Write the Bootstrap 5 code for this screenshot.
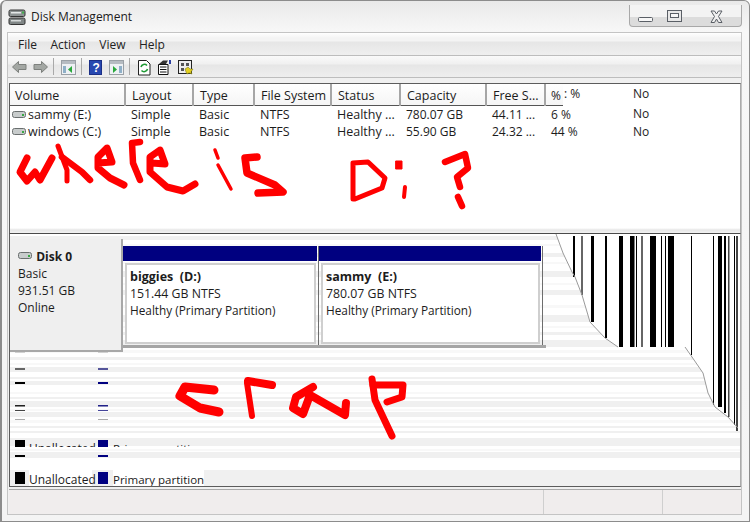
<!DOCTYPE html>
<html lang="en">
<head>
<meta charset="utf-8">
<title>Disk Management</title>
<link href="https://cdn.jsdelivr.net/npm/bootstrap@5.3.0/dist/css/bootstrap.min.css" rel="stylesheet">
<style>
html,body{margin:0;background:#fff;overflow:hidden}
body{font-family:"Open Sans","Noto Sans","Liberation Sans",sans-serif;font-size:12px;color:#1c1c1c;line-height:17px}
.dm-win{width:750px;height:522px;border:1px solid #8c8c8c;border-left-width:2px;border-radius:6px 6px 0 0;background:linear-gradient(#e9e9e9,#f7f7f7 30px,#f4f4f4);position:relative}
.dm-title{height:31px;flex:none}
.dm-title-text{font-size:12px;margin:-1px 0 0 5px}
.dm-title-ico{margin:2px 0 0 6px}
.dm-controls{width:113px;height:22px;margin:-1px 7px 0 0;border:1px solid #a8a8a8;border-top:0;border-radius:0 0 4px 4px;background:linear-gradient(#f3f3f3 55%,#dcdcdc 55%);position:relative}
.dm-controls svg{position:absolute;left:0;top:0}
.dm-inner{flex:1 1 auto;min-height:0;margin:0 7px 6px 5px;border:1px solid #c4c4c4;background:#f0f0f0}
.dm-menu{height:23px;flex:none;border-bottom:1px solid #bdbdbd;background:linear-gradient(#fff,#f4f4f4 5px,#f4f4f4 8px,#e6e6e6 9px,#efefef);padding-left:6px;gap:13.5px}
.dm-menu span{color:#222}
.dm-tools{height:22px;flex:none;border-bottom:1px solid #bdbdbd;background:linear-gradient(#fafafa,#f0f0f0 8px,#e6e6e6 9px,#eee);position:relative}
.dm-tools svg{display:block}
.dm-body{flex:1 1 auto;min-height:0;padding:5px 0 0 1px}
.dm-list{height:150px;flex:none;border-top:1px solid #5c5c5c;border-left:1px solid #5c5c5c;border-right:1px solid #ababab;background:#fff;position:relative;overflow:hidden}
.dm-list::after{content:"";position:absolute;left:0;right:0;bottom:0;height:5px;background:linear-gradient(#fff,#e6e6e6 40%,#f2f2f2)}
.dm-table{width:731px;table-layout:fixed;margin:0;--bs-table-bg:transparent;--bs-table-color:#1c1c1c}
.dm-table th,.dm-table td{padding:0 0 0 6px;font-weight:400;white-space:nowrap;overflow:visible;font-size:12.5px;border:0;line-height:17px;vertical-align:top}
.dm-table td{height:18px}
.dm-table td:nth-child(n+6){font-size:12px}
.dm-table th{height:21px}
.dm-table .dm-head-cell{background:linear-gradient(#fff,#f5f5f5);border-right:2px solid #a6a6a6;border-bottom:1px solid #555;padding-top:3px}
.dm-table .dm-head-cell:first-child{padding-left:5px}
.dm-table .dm-head-last{border-right:0;padding-left:5px;font-size:12px}
.dm-table .dm-tail{padding-top:1px;font-size:12px}
.dm-table .dm-gap{padding-left:1px}
.dm-table .dm-vol{padding-left:2px}
.dm-vol svg{vertical-align:1px;margin-right:2px}
.dm-pane{height:254px;flex:none;border-top:1px solid #4a4a4a;border-bottom:1px solid #5c5c5c;border-left:1px solid #5c5c5c;border-right:1px solid #ababab;background:#fff;position:relative;overflow:hidden}
.dm-bg{position:absolute;left:0;top:0}
.dm-row{position:relative;z-index:1}
.dm-disk{width:113px;height:113px;margin-top:5px;background:#efefef;border-right:2px solid #a8a8a8;border-bottom:2px solid #a8a8a8;padding:9px 0 0 8px;flex:none}
.dm-disk b{font-weight:700;margin-left:1px}
.dm-disk svg{margin-top:1px}
.dm-parts{margin-top:12px;border-bottom:3px solid #a5a5a5;height:102px;padding-right:3px}
.dm-part{height:99px;flex:none;border-right:1px solid #6d6d6d;padding-right:1px}
.dm-bar{height:15px;background:#000080}
.dm-box{height:81px;margin:2px 1px 0 2px;border:2px solid #cfcfcf;background:#fff;padding:3px 0 0 3px;white-space:pre}
.dm-l1{font-weight:700;font-size:12.5px;display:block}
.dm-l2{font-size:12.3px;display:block}
.dm-l3{font-size:11.8px;display:block}
.dm-legend{position:absolute;left:5px;bottom:0;z-index:1;height:16px;align-items:flex-start}
.dm-legend .dm-lg-a,.dm-legend .dm-lg-b{padding-top:1px;height:16px}
.dm-legend .dm-sw{margin-top:2px}
.dm-ghost{position:absolute;left:5px;top:206px;height:7px;overflow:hidden;z-index:1}
.dm-sw{width:10px;height:12px;flex:none;display:block}
.dm-sw-k{background:#000}
.dm-sw-n{background:#000080}
.dm-lg-a{margin:0 6px 0 4px;width:63px;background:#fff}
.dm-lg-b{margin-left:5px;background:#fff;font-size:11.5px}
.dm-ghost .dm-lg-a,.dm-ghost .dm-lg-b{background:transparent}
.dm-status{height:25px;flex:none;margin:2px 0 0 0;border-top:1px solid #a9a9a9;background:#f0eded}
.dm-cell{border-right:1px solid #cfcfcf}
.dm-scrawl{position:absolute;left:-2px;top:-1px;z-index:5;pointer-events:none}
</style>
</head>
<body>
<div class="dm-win d-flex flex-column">
  <div class="dm-title d-flex align-items-center">
    <svg class="dm-title-ico" width="18" height="17" viewBox="0 0 18 17"><rect x="1" y="1" width="16" height="6.500" rx="1.500" fill="#8d9393" stroke="#333"/><rect x="1" y="9" width="16" height="6.500" rx="1.500" fill="#7f8585" stroke="#333"/><rect x="3" y="3" width="10" height="1.500" fill="#e4e8e8"/><rect x="3" y="11" width="10" height="1.500" fill="#d4d8d8"/><rect x="14" y="2.500" width="2" height="2" fill="#3fb04a"/></svg>
    <div class="dm-title-text">Disk Management</div>
    <div class="dm-controls ms-auto">
      <svg width="113" height="22" viewBox="0 0 113 22" fill="none" stroke="#5a5f66"><rect x="8.500" y="12.500" width="14" height="4" rx="1" fill="#f7f7f7"/><rect x="37.500" y="5.500" width="14" height="11" fill="#e8e8e8"/><rect x="40.500" y="8.500" width="8" height="4" fill="#f7f7f7"/><path d="M81 6h3.500l2 3 2-3H92l-3.500 5.500L92 17.500h-3.500l-2-3.500-2 3.500H81l3.500-6z" fill="#f0f0f0"/></svg>
    </div>
  </div>
  <div class="dm-inner d-flex flex-column">
    <div class="dm-menu d-flex align-items-center"><span class="ms-1">File</span><span>Action</span><span>View</span><span>Help</span></div>
    <div class="dm-tools d-flex align-items-center">
      <svg width="200" height="22" viewBox="8 56 200 22">
        <path d="M12.500 67l6-5.500v3h7.500v5h-7.500v3z" fill="#a3a7a3" stroke="#7d807d"/>
        <path d="M47.500 67l-6-5.500v3H34v5h7.500v3z" fill="#a3a7a3" stroke="#7d807d"/>
        <path d="M53.500 58v17M81.500 58v17M129.500 58v17" stroke="#a9a9a9"/>
        <rect x="61.500" y="60.500" width="14" height="14" fill="#eef1f4" stroke="#9aa0a6"/><rect x="62" y="61" width="13" height="3" fill="#b6bcc2"/><rect x="63" y="66" width="3" height="7" fill="#8fb0c8"/><path d="M72 66v7l-4-3.500z" fill="#2aa83c"/>
        <rect x="89.500" y="60.500" width="12" height="14" fill="#2848b0" stroke="#1b2f86"/><text x="92.500" y="72" font-size="12" font-weight="700" fill="#fff" font-family="Liberation Sans">?</text>
        <rect x="109.500" y="60.500" width="14" height="14" fill="#eef1f4" stroke="#9aa0a6"/><rect x="110" y="61" width="13" height="3" fill="#b6bcc2"/><rect x="119" y="66" width="3" height="7" fill="#8fb0c8"/><path d="M113 66v7l4-3.500z" fill="#2aa83c"/>
        <path d="M138.500 60.500h8l3.500 3.500v11h-11.500z" fill="#fff" stroke="#222"/><path d="M141 67a3.500 3.500 0 0 1 6-1.500M147.500 69a3.500 3.500 0 0 1-6 1.500" fill="none" stroke="#1f9a35" stroke-width="1.600"/>
        <path d="M158.500 64.500h9.500v10h-9.500z" fill="#fff" stroke="#111"/><path d="M160 67h6.500M160 69.500h6.500M160 72h6.500" stroke="#111"/><path d="M159 64l4-3.500h5l-2 3.500z" fill="#333"/><rect x="169" y="60" width="2" height="4" fill="#2b3fa0"/>
        <rect x="178.500" y="60.500" width="13" height="13" fill="#eee" stroke="#222"/><path d="M181 63h3v3h-3zM186 63h3v3h-3zM181 68h3v3h-3z" fill="#555"/><path d="M185 69l3-2 2 2 3 0-2 3 1 2-3-1-2 1-1-2z" fill="#e3cf1f" stroke="#6d6d12" stroke-width=".5"/>
      </svg>
    </div>
    <div class="dm-body d-flex flex-column">
      <div class="dm-list">
        <table class="table table-borderless dm-table">
          <colgroup><col style="width:115px"><col style="width:68px"><col style="width:61px"><col style="width:77px"><col style="width:69px"><col style="width:86px"><col style="width:59px"><col style="width:18px"><col style="width:70px"><col></colgroup>
          <thead><tr>
            <th class="dm-head-cell">Volume</th><th class="dm-head-cell">Layout</th><th class="dm-head-cell">Type</th><th class="dm-head-cell">File System</th><th class="dm-head-cell">Status</th><th class="dm-head-cell">Capacity</th><th class="dm-head-cell">Free S...</th><th class="dm-head-cell dm-head-last">%</th><th class="dm-tail dm-gap">: %</th><th class="dm-tail ps-0">No</th>
          </tr></thead>
          <tbody>
            <tr><td class="dm-vol"><svg width="14" height="7" viewBox="0 0 14 7"><rect x=".5" y=".5" width="13" height="6" rx="2" fill="#c8cccc" stroke="#6a6f6f"/><rect x="10" y="3" width="2" height="2" fill="#39a845"/></svg>sammy (E:)</td><td>Simple</td><td>Basic</td><td>NTFS</td><td>Healthy ...</td><td>780.07 GB</td><td>44.11 ...</td><td>6 %</td><td></td><td class="ps-0">No</td></tr>
            <tr><td class="dm-vol"><svg width="14" height="7" viewBox="0 0 14 7"><rect x=".5" y=".5" width="13" height="6" rx="2" fill="#c8cccc" stroke="#6a6f6f"/><rect x="10" y="3" width="2" height="2" fill="#39a845"/></svg>windows (C:)</td><td>Simple</td><td>Basic</td><td>NTFS</td><td>Healthy ...</td><td>55.90 GB</td><td>24.32 ...</td><td>44 %</td><td></td><td class="ps-0">No</td></tr>
          </tbody>
        </table>
      </div>
      <div class="dm-pane d-flex flex-column">
        <svg class="dm-bg" width="731" height="253" viewBox="10 234 731 253">
          <defs><clipPath id="dmclip"><path d="M0 234H556L563 253 572 272 575 277 582 295 590 322 605 338 618 347H685L692 357 703 373 708 393 715 407 728 417 738 428 741 431V490H0z"/></clipPath></defs>
          <g clip-path="url(#dmclip)">
            <path fill="#f0f0f0" d="M0 236h741v4H0zM0 253h741v4H0zM0 271h741v6H0zM0 290h741v5H0zM0 315h741v7H0zM0 332h741v3H0zM0 340h741v7H0zM0 357h741v3H0zM0 367h741v5H0zM0 377h741v2H0zM0 381h741v4H0zM0 397h741v2H0zM0 401h741v6H0zM0 412h741v5H0zM0 426h741v2H0zM0 431h741v2H0zM0 438h741v8H0zM0 452h741v6H0zM0 470h741v17H0z"/>
            <path fill="#f8f8f8" d="M0 244h741v2H0zM0 262h741v2H0zM0 283h741v2H0zM0 305h741v3H0zM0 326h741v2H0zM0 350h741v3H0zM0 363h741v2H0zM0 392h741v2H0zM0 409h741v2H0zM0 420h741v3H0zM0 449h741v2H0z"/>
          </g>
          <g fill="#000">
            <rect x="573" y="236" width="2" height="41"/><rect x="581" y="236" width="2" height="59" fill="#666"/><rect x="591" y="236" width="3" height="86"/><rect x="605" y="236" width="2" height="102"/><rect x="619" y="236" width="4" height="111"/><rect x="630" y="236" width="4.500" height="111"/><rect x="636" y="236" width="1" height="111"/><rect x="641" y="236" width="2" height="111" fill="#666"/><rect x="650" y="236" width="6" height="111"/><rect x="661" y="236" width="1" height="111"/><rect x="665" y="236" width="1" height="111"/><rect x="668" y="236" width="6" height="111"/><rect x="691" y="236" width="1" height="119"/><rect x="713" y="236" width="1" height="169"/><rect x="718" y="236" width="4" height="171"/><rect x="724" y="236" width="2" height="177"/><rect x="728" y="236" width="1.500" height="181" fill="#444"/><rect x="734" y="236" width="1" height="189"/><rect x="736" y="236" width="2" height="195" fill="#444"/>
          </g>
          <path d="M556 234L563 253 572 272 575 277 582 295 590 322 605 338 618 347M685 347L692 357 703 373 708 393 715 407 728 417 738 428" fill="none" stroke="#9a9a9a"/>
          <g>
            <rect x="15" y="351" width="10" height="1.500" fill="#aaa"/><rect x="98" y="351" width="10" height="1.500" fill="#aaa"/>
            <rect x="15" y="368" width="10" height="2" fill="#666"/><rect x="98" y="368" width="10" height="2" fill="#55559a"/>
            <rect x="15" y="382" width="10" height="2" fill="#000"/><rect x="98" y="382" width="10" height="2" fill="#000080"/>
            <rect x="15" y="405" width="10" height="1.500" fill="#222"/><rect x="98" y="405" width="10" height="1.500" fill="#22228a"/>
            <rect x="15" y="410" width="10" height="1" fill="#444"/><rect x="98" y="410" width="10" height="1" fill="#44449a"/>
            <rect x="15" y="419" width="10" height="1" fill="#aaa"/><rect x="98" y="419" width="10" height="1" fill="#aaa"/>
            <rect x="15" y="455" width="10" height="2" fill="#000"/><rect x="98" y="455" width="10" height="2" fill="#000080"/>
          </g>
        </svg>
        <div class="dm-row d-flex align-items-start">
          <div class="dm-disk">
            <svg width="14" height="7" viewBox="0 0 14 7" class="align-top mt-1"><rect x=".5" y=".5" width="13" height="6" rx="2" fill="#c8cccc" stroke="#6a6f6f"/><rect x="10" y="3" width="2" height="2" fill="#39a845"/></svg>
            <b>Disk 0</b><br>Basic<br>931.51 GB<br>Online
          </div>
          <div class="dm-parts d-flex">
            <div class="dm-part" style="width:196px"><div class="dm-bar"></div><div class="dm-box"><span class="dm-l1">biggies  (D:)</span><span class="dm-l2">151.44 GB NTFS</span><span class="dm-l3">Healthy (Primary Partition)</span></div></div>
            <div class="dm-part" style="width:224px"><div class="dm-bar"></div><div class="dm-box"><span class="dm-l1">sammy  (E:)</span><span class="dm-l2">780.07 GB NTFS</span><span class="dm-l3">Healthy (Primary Partition)</span></div></div>
          </div>
        </div>
        <div class="dm-ghost d-flex"><span class="dm-sw dm-sw-k"></span><span class="dm-lg-a">Unallocated</span><span class="dm-sw dm-sw-n"></span><span class="dm-lg-b">Primary partition</span></div>
        <div class="dm-legend d-flex"><span class="dm-sw dm-sw-k"></span><span class="dm-lg-a">Unallocated</span><span class="dm-sw dm-sw-n"></span><span class="dm-lg-b">Primary partition</span></div>
      </div>
      <div class="dm-status d-flex">
        <div class="dm-cell" style="width:535px"></div><div class="dm-cell" style="width:119px"></div><div class="flex-fill"></div>
      </div>
    </div>
  </div>
  <svg class="dm-scrawl" width="750" height="522" viewBox="0 0 750 522" fill="none" stroke="#f00" stroke-linecap="round" stroke-linejoin="round">
    <g stroke-width="7">
      <path d="M27 158L20 172 27 181 35 172 40 180 52 158"/>
      <path d="M58 146L67 170 67 181" stroke-width="5"/>
      <path d="M62 157L82 172 90 180" stroke-width="6.500"/>
      <path d="M98 163L112 162 107 148 98 157 98 168 110 178 124 185"/>
      <path d="M132 143L133 163 140 180M132 143L140 142" stroke-width="6.500"/>
      <path d="M152 163L165 164 160 150 150 157 150 172 167 187 183 191 195 184"/>
      <path d="M215 150L218 158" stroke-width="3.500"/>
      <path d="M218 165L231 189" stroke-width="3.500"/>
      <path d="M257 157L245 158 247 173 275 185 283 192 258 193" stroke-width="7.500"/>
      <path d="M353 163V199M353 163L368 162 385 178 382 188 355 199" stroke-width="5"/>
      <path d="M396 161h6v8h-6z" fill="#f00" stroke-width="1"/>
      <path d="M405 187L404 197" stroke-width="4"/>
      <path d="M445 162L465 154 468 168 457 177 460 187" stroke-width="6.500"/>
      <path d="M458 197L462 206" stroke-width="6.500"/>
      <path d="M214 390L185 387 180 396 200 408 219 412" stroke-width="9"/>
      <path d="M247 383L252 416" stroke-width="6"/>
      <path d="M248 381L272 385" stroke-width="8"/>
      <path d="M313 387L296 397 293 408 303 414 310 395 345 415 346 403" stroke-width="8"/>
      <path d="M372 379L375 400 392 436" stroke-width="7"/>
      <path d="M373 385L403 385 402 397 387 402" stroke-width="7"/>
    </g>
  </svg>
</div>
<script src="https://cdn.jsdelivr.net/npm/bootstrap@5.3.0/dist/js/bootstrap.bundle.min.js"></script>
</body>
</html>
